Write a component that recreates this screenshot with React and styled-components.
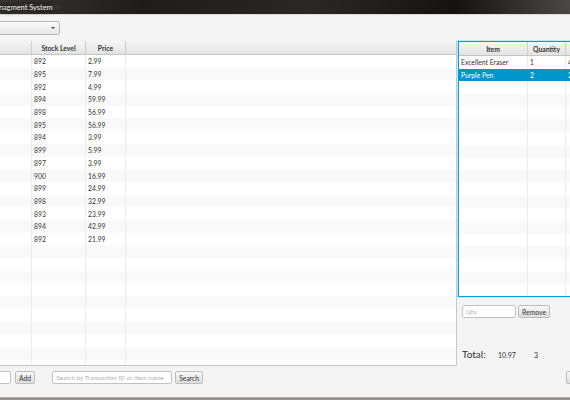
import { createGlobalStyle, styled } from 'styled-components';

const GlobalStyle = createGlobalStyle`
  html, body { margin: 0; padding: 0; background: #f4f4f4; }
  body { font-family: Lato, "Open Sans", sans-serif; color: #333; }
`;

const Window = styled.div`
  width: 570px;
  height: 400px;
  overflow: hidden;
  display: flex;
  flex-direction: column;
  background: #f4f4f4;
`;

const TitleBar = styled.div`
  height: 14px;
  flex: none;
  display: flex;
  align-items: center;
  background: linear-gradient(90deg, #3a3633 0%, #1f1c1a 25%, #2a2725 55%, #151311 80%, #4a4744 100%);
  border-bottom: 1px solid #d9d9d9;
`;

const Title = styled.span`
  font-size: 7.4px;
  color: #f2f2f2;
  margin-left: -1px;
  padding: 0 10px 0 0;
  text-shadow: 0 0 4px #000, 0 0 6px #000;
  background: radial-gradient(ellipse at center, rgba(110,105,100,0.6) 0%, rgba(0,0,0,0) 70%);
`;

const Toolbar = styled.div`
  height: 26px;
  flex: none;
  display: flex;
  align-items: center;
`;

const Combo = styled.div`
  width: 100px;
  height: 14px;
  margin-left: -40px;
  box-sizing: border-box;
  border: 1px solid #b9b9b9;
  border-radius: 2px;
  background: linear-gradient(#fbfbfb, #e6e6e6);
  display: flex;
  align-items: center;
  justify-content: flex-end;
  padding-right: 4px;
`;

const Arrow = styled.span`
  width: 0;
  height: 0;
  border-left: 2px solid transparent;
  border-right: 2px solid transparent;
  border-top: 2.5px solid #444;
`;

const Main = styled.div`
  flex: none;
  height: 325px;
  display: flex;
`;

const LeftTable = styled.div`
  width: 457px;
  flex: none;
  display: flex;
  flex-direction: column;
  background: #fff;
  border-right: 1px solid #c8c8c8;
  border-bottom: 1px solid #c8c8c8;
  box-sizing: border-box;
  overflow: hidden;
`;

const HeaderRow = styled.div`
  height: 14px;
  flex: none;
  display: flex;
  background: linear-gradient(#f6f6f6, #e3e3e3);
  border-bottom: 1px solid #c5c5c5;
  box-sizing: border-box;
`;

const HeadCell = styled.div`
  width: ${p => p.$w}px;
  flex: ${p => (p.$grow ? '1' : 'none')};
  box-sizing: border-box;
  border-right: ${p => (p.$grow ? 'none' : '1px solid #cfcfcf')};
  font-size: 6.8px;
  font-weight: 700;
  display: flex;
  align-items: center;
  justify-content: center;
  color: #333;
  white-space: nowrap;
`;

const Row = styled.div`
  height: 12.7px;
  flex: none;
  display: flex;
  background: ${p => (p.$sel ? '#0096c9' : p.$odd ? '#f9f9f9' : '#fff')};
  color: ${p => (p.$sel ? '#fff' : '#333')};
`;

const Cell = styled.div`
  width: ${p => p.$w}px;
  flex: ${p => (p.$grow ? '1' : 'none')};
  box-sizing: border-box;
  border-right: ${p => (p.$grow ? 'none' : `1px solid ${p.$sel ? 'transparent' : '#ececec'}`)};
  font-size: 6.8px;
  padding-left: 2px;
  display: flex;
  align-items: center;
  white-space: nowrap;
  overflow: hidden;
`;

const RightPanel = styled.div`
  flex: 1;
  display: flex;
  flex-direction: column;
  padding-left: 1px;
`;

const RightTable = styled.div`
  height: 256px;
  flex: none;
  display: flex;
  flex-direction: column;
  background: #fff;
  border: 1px solid #039ed3;
  border-right: none;
  box-shadow: 0 0 0 1px #c3e7f5;
  box-sizing: border-box;
  width: 130px;
  overflow: hidden;
`;

const QtyRow = styled.div`
  display: flex;
  gap: 2px;
  margin: 8px 0 0 4px;
`;

const Field = styled.div`
  width: ${p => p.$w}px;
  height: 13px;
  box-sizing: border-box;
  border: 1px solid #c2c2c2;
  border-radius: 2px;
  background: #fff;
  margin-left: ${p => p.$ml || 0}px;
  font-size: 6.4px;
  color: #b0b0b0;
  display: flex;
  align-items: center;
  padding-left: 3px;
  white-space: nowrap;
  overflow: hidden;
`;

const Button = styled.div`
  height: 13px;
  box-sizing: border-box;
  border: 1px solid #bdbdbd;
  border-radius: 2px;
  background: linear-gradient(#f8f8f8, #dedede);
  font-size: 6.8px;
  padding: 0 3px;
  display: flex;
  align-items: center;
  color: #333;
  margin-left: ${p => p.$ml || 0}px;
`;

const TotalRow = styled.div`
  display: flex;
  align-items: baseline;
  margin: 30px 0 0 4px;
`;

const TotalLabel = styled.span`
  font-size: 10px;
  width: 36px;
`;

const TotalValue = styled.span`
  font-size: 7px;
  width: ${p => p.$w}px;
`;

const Bottom = styled.div`
  height: 31px;
  flex: none;
  display: flex;
  align-items: flex-start;
  padding-top: 5px;
  box-sizing: border-box;
`;

const BottomRight = styled.div`
  margin-left: auto;
  margin-right: -20px;
  display: flex;
  align-items: center;
`;

const Frame = styled.div`
  flex: 1;
  background: linear-gradient(#c8c4c0, #8e8985 40%, #a29d99);
`;

const stock = [
  ['892', '2.99'], ['895', '7.99'], ['892', '4.99'], ['894', '59.99'],
  ['898', '56.99'], ['895', '56.99'], ['894', '3.99'], ['899', '5.99'],
  ['897', '3.99'], ['900', '16.99'], ['899', '24.99'], ['898', '32.99'],
  ['893', '23.99'], ['894', '42.99'], ['892', '21.99'],
];

const cart = [
  ['Excellent Eraser', '1', '4'],
  ['Purple Pen', '2', '2'],
];

export default function App() {
  const leftRows = Array.from({ length: 25 }, (_, i) => stock[i] || ['', '']);
  const rightRows = Array.from({ length: 20 }, (_, i) => cart[i] || ['', '', '']);

  return (
    <>
      <GlobalStyle />
      <Window>
        <TitleBar>
          <Title>nagment System</Title>
        </TitleBar>
        <Toolbar>
          <Combo><Arrow /></Combo>
        </Toolbar>
        <Main>
          <LeftTable>
            <HeaderRow>
              <HeadCell $w={32} />
              <HeadCell $w={54}>Stock Level</HeadCell>
              <HeadCell $w={40}>Price</HeadCell>
              <HeadCell $grow />
            </HeaderRow>
            {leftRows.map((r, i) => (
              <Row key={i} $odd={i % 2 === 1}>
                <Cell $w={32} />
                <Cell $w={54}>{r[0]}</Cell>
                <Cell $w={40}>{r[1]}</Cell>
                <Cell $grow />
              </Row>
            ))}
          </LeftTable>
          <RightPanel>
            <RightTable>
              <HeaderRow>
                <HeadCell $w={69}>Item</HeadCell>
                <HeadCell $w={38}>Quantity</HeadCell>
                <HeadCell $grow />
              </HeaderRow>
              {rightRows.map((r, i) => (
                <Row key={i} $odd={i % 2 === 1 && i > 1} $sel={i === 1}>
                  <Cell $w={69} $sel={i === 1}>{r[0]}</Cell>
                  <Cell $w={38} $sel={i === 1}>{r[1]}</Cell>
                  <Cell $grow>{r[2]}</Cell>
                </Row>
              ))}
            </RightTable>
            <QtyRow>
              <Field $w={54}>Qty</Field>
              <Button>Remove</Button>
            </QtyRow>
            <TotalRow>
              <TotalLabel>Total:</TotalLabel>
              <TotalValue $w={36}>10.97</TotalValue>
              <TotalValue $w={20}>3</TotalValue>
            </TotalRow>
          </RightPanel>
        </Main>
        <Bottom>
          <Field $w={40} $ml={-29} />
          <Button $ml={4}>Add</Button>
          <Field $w={120} $ml={17}>Search by Transaction ID or item name</Field>
          <Button $ml={3}>Search</Button>
          <BottomRight>
            <Button>Clear</Button>
          </BottomRight>
        </Bottom>
        <Frame />
      </Window>
    </>
  );
}
